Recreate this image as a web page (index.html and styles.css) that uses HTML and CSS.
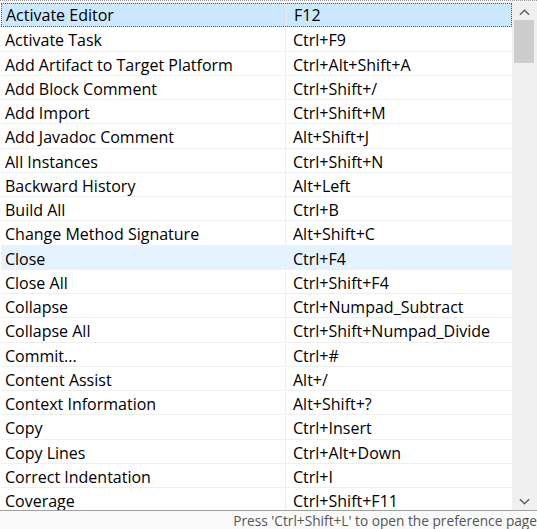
FILE: index.html
```html
<!DOCTYPE html>
<html lang="en">
    <head>
        <meta charset="UTF-8" />
        <title>Keys</title>
        <link rel="stylesheet" href="styles.css">
    </head>
    <body>
        <div class="window">
            <div class="header"></div>
            <div class="list">
                <div class="table">
                    <div class="row selected"><div class="cmd">Activate Editor</div><div class="key">F12</div></div>
                    <div class="row"><div class="cmd">Activate Task</div><div class="key">Ctrl+F9</div></div>
                    <div class="row"><div class="cmd">Add Artifact to Target Platform</div><div class="key">Ctrl+Alt+Shift+A</div></div>
                    <div class="row"><div class="cmd">Add Block Comment</div><div class="key">Ctrl+Shift+/</div></div>
                    <div class="row"><div class="cmd">Add Import</div><div class="key">Ctrl+Shift+M</div></div>
                    <div class="row"><div class="cmd">Add Javadoc Comment</div><div class="key">Alt+Shift+J</div></div>
                    <div class="row"><div class="cmd">All Instances</div><div class="key">Ctrl+Shift+N</div></div>
                    <div class="row"><div class="cmd">Backward History</div><div class="key">Alt+Left</div></div>
                    <div class="row"><div class="cmd">Build All</div><div class="key">Ctrl+B</div></div>
                    <div class="row"><div class="cmd">Change Method Signature</div><div class="key">Alt+Shift+C</div></div>
                    <div class="row hover"><div class="cmd">Close</div><div class="key">Ctrl+F4</div></div>
                    <div class="row"><div class="cmd">Close All</div><div class="key">Ctrl+Shift+F4</div></div>
                    <div class="row"><div class="cmd">Collapse</div><div class="key">Ctrl+Numpad_Subtract</div></div>
                    <div class="row"><div class="cmd">Collapse All</div><div class="key">Ctrl+Shift+Numpad_Divide</div></div>
                    <div class="row"><div class="cmd">Commit...</div><div class="key">Ctrl+#</div></div>
                    <div class="row"><div class="cmd">Content Assist</div><div class="key">Alt+/</div></div>
                    <div class="row"><div class="cmd">Context Information</div><div class="key">Alt+Shift+?</div></div>
                    <div class="row"><div class="cmd">Copy</div><div class="key">Ctrl+Insert</div></div>
                    <div class="row"><div class="cmd">Copy Lines</div><div class="key">Ctrl+Alt+Down</div></div>
                    <div class="row"><div class="cmd">Correct Indentation</div><div class="key">Ctrl+I</div></div>
                    <div class="row"><div class="cmd">Coverage</div><div class="key">Ctrl+Shift+F11</div></div>
                </div>
                <div class="scrollbar">
                    <div class="arrow">
                        <svg viewBox="0 0 12 8"><path d="M1 7 L6 2 L11 7" /></svg>
                    </div>
                    <div class="track">
                        <div class="thumb"></div>
                    </div>
                    <div class="arrow">
                        <svg viewBox="0 0 12 8"><path d="M1 1 L6 6 L11 1" /></svg>
                    </div>
                </div>
            </div>
            <div class="status">
                <span class="hint">Press 'Ctrl+Shift+L' to open the preference page</span>
            </div>
        </div>
    </body>
</html>
```

FILE: styles.css
```css
* {
    margin: 0;
    padding: 0;
    box-sizing: border-box;
}
body {
    background: #fff;
    font-family: 'Open Sans', 'Noto Sans', sans-serif;
    color: #000;
}
.window {
    width: 537px;
    height: 529px;
    display: flex;
    flex-direction: column;
    overflow: hidden;
}
.header {
    height: 3px;
    flex-shrink: 0;
    border-top: 1px dotted #9a9a9a;
    background: #f4f4f4;
}
.list {
    flex: 1;
    display: flex;
    overflow: hidden;
}
.table {
    width: 512px;
    display: flex;
    flex-direction: column;
    padding-left: 1px;
}
.row {
    height: 24.25px;
    flex-shrink: 0;
    display: flex;
    border-bottom: 1px solid #efefef;
    font-size: 16px;
    line-height: 24px;
    padding-top: 1px;
}
.row .cmd {
    width: 285px;
    padding-left: 4px;
    border-right: 1px solid #ececec;
    white-space: nowrap;
}
.row .key {
    flex: 1;
    padding-left: 7px;
    white-space: nowrap;
}
.row.selected {
    background: #cce8ff;
    border: 1px dotted #555;
    line-height: 22px;
    padding-top: 0;
}
.row.hover {
    background: #e5f3ff;
}
.scrollbar {
    width: 25px;
    display: flex;
    flex-direction: column;
    background: #f0f0f0;
}
.scrollbar .arrow {
    height: 17px;
    display: flex;
    justify-content: center;
    align-items: center;
}
.scrollbar svg {
    width: 11px;
    height: 8px;
    fill: none;
    stroke: #606060;
    stroke-width: 1.6;
}
.scrollbar .track {
    flex: 1;
    padding: 0 3px 0 2px;
}
.scrollbar .thumb {
    height: 43px;
    background: #cdcdcd;
}
.status {
    height: 19px;
    flex-shrink: 0;
    border-top: 1px solid #a0a0a0;
    background: #fafafa;
    display: flex;
    justify-content: flex-end;
    align-items: center;
    font-size: 13.7px;
    color: #555;
}
.status .hint {
    white-space: nowrap;
}
```
